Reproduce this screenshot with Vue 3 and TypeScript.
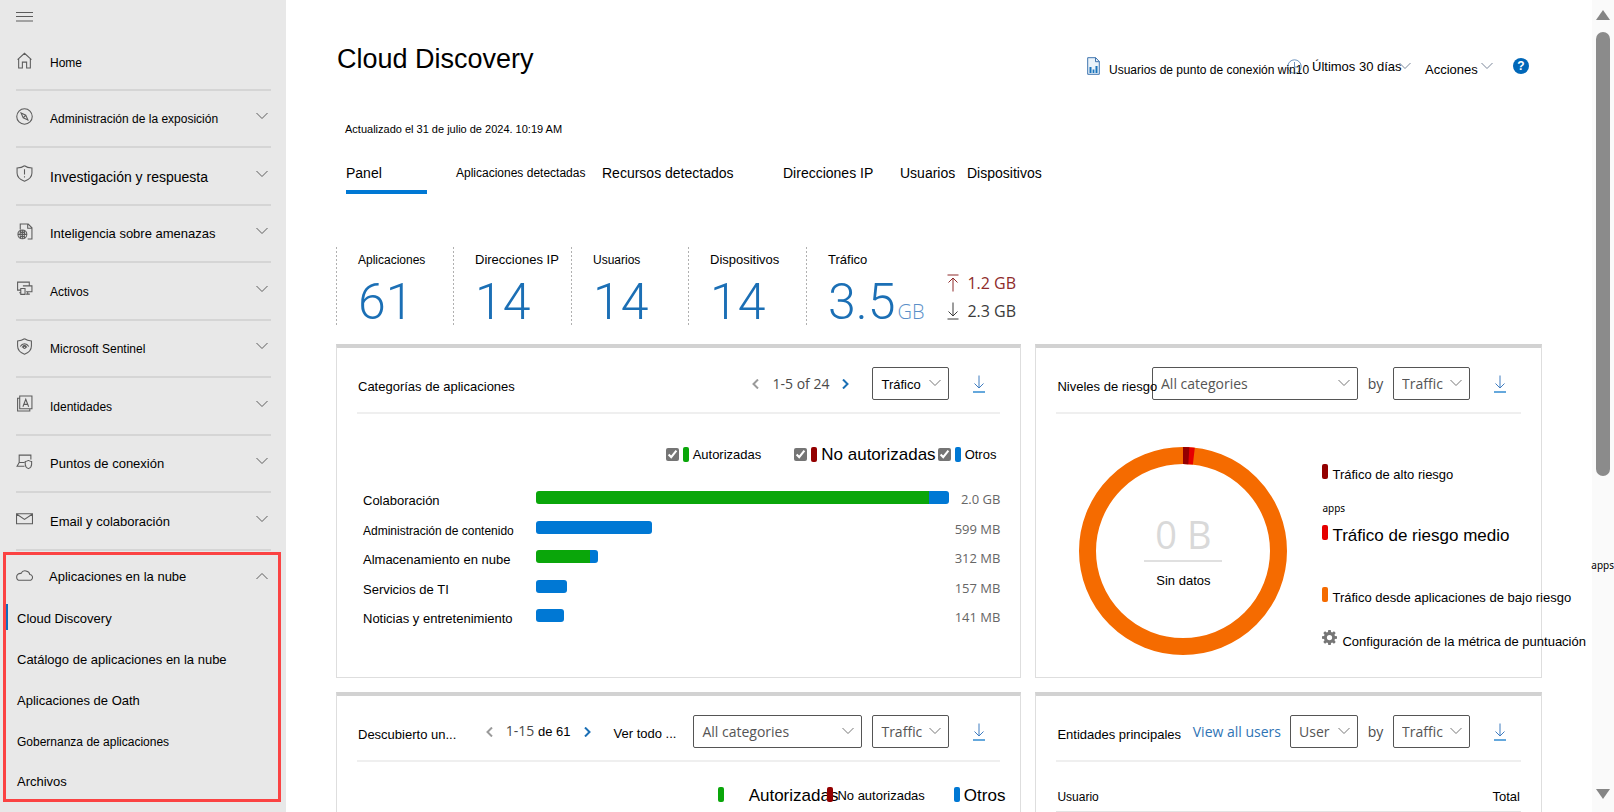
<script setup lang="ts">
import { ref } from 'vue'

interface NavItem {
  label: string
  size: string
  icon: string
  expandable: boolean
}

interface Segment {
  tone: string
  percent: number
}

interface CategoryRow {
  label: string
  size: string
  value: string
  segments: Segment[]
}

const icons: Record<string, string> = {
  home: 'M1.5 7.2 8 1.2l6.500 6M2.500 6.300V15H6V9.500h4V15h3.500V6.300',
  compass: 'M8 .7a7.300 7.300 0 1 0 0 14.600A7.300 7.300 0 0 0 8 .7M4.800 4.800l4.400 2 2 4.400-4.400-2zM6.800 9.200l2.400-2.400',
  shield: 'M8 .7C6 2.200 3.500 2.700 1 2.800v4.700c0 3.700 3 6.300 7 7.800 4-1.500 7-4.100 7-7.800V2.800C12.500 2.700 10 2.200 8 .7M8 4v5M8 10.500v1.300',
  intel: 'M4 6V1h7.500L15 4.500V15h-4M11 1v4h4M6 6.500a4.200 4.200 0 1 0 0 8.400 4.200 4.200 0 0 0 0-8.400M2 10.700h8M6 6.500v8.400M3.500 8.200c1.500 1 3.500 1 5 0M3.500 13.200c1.500-1 3.500-1 5 0M4.500 7c-1 2.500-1 5 0 7.500M7.500 7c1 2.500 1 5 0 7.500',
  assets: 'M4 9.500H1.500V2h11v3M6.500 5.500H15V11H9.500M4.500 8h4v5.500h-4zM3 12h1.500M11 11v2M9.500 13.300H13',
  sentinel: 'M8 .7C6 2 4 2.600 1.500 2.800v4.700c0 3.700 2.700 6.300 6.500 7.800 3.800-1.500 6.500-4.100 6.500-7.800V2.800C12 2.600 10 2 8 .7M4 8c2-3.500 6-3.500 8 0M5.800 9c1-2.800 3.400-2.800 4.400 0M8 7.800a1 1 0 1 0 0 2 1 1 0 0 0 0-2',
  identity: 'M3.500 1H15v12H3.500zM3.500 3H1.500v12H13v-2M6.500 11l2.700-7 2.700 7M7.500 8.800h3.500',
  endpoint: 'M3 9V2h11v4M3 9l-2 3.500h7M1 12.500h7M3 9h5M11.700 7c-1 .7-2 1-3 1v2.500c0 2 1.300 3.500 3 4.200 1.700-.7 3-2.200 3-4.200V8c-1 0-2-.3-3-1',
  mail: 'M.5 3.500h15v9.500H.5zM.5 3.800 8 8.800l7.500-5',
  cloud: 'M3.800 12.500h8.900a2.700 2.700 0 0 0 .3-5.400C12.500 3.500 6.500 2 4.800 6 2 5.800.6 7.600.6 9.300c0 1.900 1.300 3.200 3.200 3.200z'
}

const navItems: NavItem[] = [
  { label: 'Home', size: 't12', icon: 'home', expandable: false },
  { label: 'Administración de la exposición', size: 't12', icon: 'compass', expandable: true },
  { label: 'Investigación y respuesta', size: 't14', icon: 'shield', expandable: true },
  { label: 'Inteligencia sobre amenazas', size: 't13', icon: 'intel', expandable: true },
  { label: 'Activos', size: 't12', icon: 'assets', expandable: true },
  { label: 'Microsoft Sentinel', size: 't12', icon: 'sentinel', expandable: true },
  { label: 'Identidades', size: 't12', icon: 'identity', expandable: true },
  { label: 'Puntos de conexión', size: 't13', icon: 'endpoint', expandable: true },
  { label: 'Email y colaboración', size: 't13', icon: 'mail', expandable: true }
]

const cloudLinks = [
  { label: 'Cloud Discovery', size: 't13' },
  { label: 'Catálogo de aplicaciones en la nube', size: 't13' },
  { label: 'Aplicaciones de Oath', size: 't13' },
  { label: 'Gobernanza de aplicaciones', size: 't12' },
  { label: 'Archivos', size: 't13' }
]

const tabs = [
  { label: 'Panel', size: 't14' },
  { label: 'Aplicaciones detectadas', size: 't12' },
  { label: 'Recursos detectados', size: 't14' },
  { label: 'Direcciones IP', size: 't14' },
  { label: 'Usuarios', size: 't14' },
  { label: 'Dispositivos', size: 't14' }
]
const activeTab = ref('Panel')

const stats = [
  { label: 'Aplicaciones', size: 't12', value: '61' },
  { label: 'Direcciones IP', size: 't13', value: '14' },
  { label: 'Usuarios', size: 't12', value: '14' },
  { label: 'Dispositivos', size: 't13', value: '14' }
]

const series = ref([
  { label: 'Autorizadas', size: 't13', tone: 'green', on: true },
  { label: 'No autorizadas', size: 't17', tone: 'dark', on: true },
  { label: 'Otros', size: 't13', tone: 'blue', on: true }
])

const categories: CategoryRow[] = [
  { label: 'Colaboración', size: 't13', value: '2.0 GB', segments: [{ tone: 'green', percent: 95 }, { tone: 'blue', percent: 5 }] },
  { label: 'Administración de contenido', size: 't12', value: '599 MB', segments: [{ tone: 'blue', percent: 28 }] },
  { label: 'Almacenamiento en nube', size: 't13', value: '312 MB', segments: [{ tone: 'green', percent: 13 }, { tone: 'blue', percent: 2 }] },
  { label: 'Servicios de TI', size: 't13', value: '157 MB', segments: [{ tone: 'blue', percent: 7.5 }] },
  { label: 'Noticias y entretenimiento', size: 't13', value: '141 MB', segments: [{ tone: 'blue', percent: 6.7 }] }
]
</script>

<template>
  <div class="shell">
    <nav class="sidebar" aria-label="Principal">
      <div class="topbar">
        <button class="plain" aria-label="Menú">
          <svg width="18" height="12" viewBox="0 0 18 12" class="line-icon"><path d="M0 1.500h17M0 5.500h17M0 10h17" /></svg>
        </button>
      </div>
      <ul class="nav-list">
        <li v-for="item in navItems" :key="item.label">
          <button class="nav-row">
            <svg class="line-icon" width="17" height="17" viewBox="0 0 16 16"><path :d="icons[item.icon]" /></svg>
            <span class="nav-label" :class="item.size">{{ item.label }}</span>
            <svg v-if="item.expandable" class="line-icon" width="12" height="8" viewBox="0 0 12 8"><path d="M.5 1 6 6.500 11.500 1" /></svg>
          </button>
        </li>
      </ul>
      <section class="cloud-group">
        <button class="nav-row cloud-head" aria-expanded="true">
          <svg class="line-icon" width="17" height="17" viewBox="0 0 16 16"><path :d="icons.cloud" /></svg>
          <span class="nav-label t13">Aplicaciones en la nube</span>
          <svg class="line-icon" width="12" height="8" viewBox="0 0 12 8"><path d="M.5 7 6 1.500 11.500 7" /></svg>
        </button>
        <ul class="cloud-list">
          <li v-for="(link, i) in cloudLinks" :key="link.label" :class="{ current: i === 0 }">
            <a href="#" :class="link.size">{{ link.label }}</a>
          </li>
        </ul>
      </section>
    </nav>

    <main class="content">
      <header class="page-head">
        <h1>Cloud Discovery</h1>
        <div class="actions">
          <svg width="13" height="18" viewBox="0 0 13 18" class="doc">
            <path d="M.7.700h8L12.300 4.500v12.800H.700z" fill="#eaf3fa" stroke="#3f74ae" />
            <path d="M8.500.700v4h4" fill="none" stroke="#3f74ae" />
            <path d="M2.500 10h2v6h-2zM5.600 12.500h1.800V16H5.600zM8.500 9h2v7h-2z" fill="#1b74bb" />
          </svg>
          <button class="plain report t12">
            <svg width="15" height="15" viewBox="0 0 15 15"><circle cx="7.500" cy="7.500" r="6.700" /><path d="M7.500 3v5h3.500" /></svg>
            <span>Usuarios de punto de conexión win10</span>
          </button>
          <button class="plain range t13"><span>Últimos 30 días</span><svg width="12" height="8" viewBox="0 0 12 8"><path d="M.5 1 6 6.500 11.500 1" /></svg></button>
          <button class="plain more t13"><span>Acciones</span><svg width="12" height="8" viewBox="0 0 12 8"><path d="M.5 1 6 6.500 11.500 1" /></svg></button>
          <button class="help" aria-label="Ayuda">?</button>
        </div>
      </header>

      <p class="updated">Actualizado el 31 de julio de 2024. 10:19 AM</p>

      <div class="tabs" role="tablist">
        <button
          v-for="tab in tabs"
          :key="tab.label"
          role="tab"
          class="tab"
          :class="[tab.size, { active: tab.label === activeTab }]"
          :aria-selected="tab.label === activeTab"
          @click="activeTab = tab.label"
        >{{ tab.label }}</button>
      </div>

      <section class="stats">
        <div v-for="stat in stats" :key="stat.label" class="stat">
          <span class="stat-label" :class="stat.size">{{ stat.label }}</span>
          <span class="stat-value">{{ stat.value }}</span>
        </div>
        <div class="stat traffic">
          <div>
            <span class="stat-label t13">Tráfico</span>
            <span class="stat-value">3.5<small>GB</small></span>
          </div>
          <div class="flows">
            <span class="flow up"><svg width="12" height="18" viewBox="0 0 12 18"><path d="M.5 1h11M6 17.500V4M1.500 8.500 6 4l4.500 4.500" /></svg>1.2 GB</span>
            <span class="flow"><svg width="12" height="18" viewBox="0 0 12 18"><path d="M.5 17h11M6 .500V14M1.500 9.500 6 14l4.500-4.500" /></svg>2.3 GB</span>
          </div>
        </div>
      </section>

      <div class="cards">
        <section class="card">
          <header class="card-head">
            <h2>Categorías de aplicaciones</h2>
            <div class="pager">
              <button class="plain prev" aria-label="Anterior"><svg width="7" height="10" viewBox="0 0 7 10"><path d="M6 .500 1.500 5 6 9.500" /></svg></button>
              <span>1-5 of 24</span>
              <button class="plain next" aria-label="Siguiente"><svg width="7" height="10" viewBox="0 0 7 10"><path d="M1 .500 5.500 5 1 9.500" /></svg></button>
            </div>
            <span class="picker w77">
              <select class="dark-text" aria-label="Medida"><option>Tráfico</option></select>
              <svg width="12" height="8" viewBox="0 0 12 8"><path d="M.5 1 6 6.500 11.500 1" /></svg>
            </span>
            <button class="plain download" aria-label="Descargar"><svg width="14" height="18" viewBox="0 0 14 18"><path d="M7 .500V13M2.500 8.500 7 13l4.500-4.500" /><path class="base" d="M1 17h12" /></svg></button>
          </header>
          <div class="series">
            <label v-for="s in series" :key="s.label" :class="s.size">
              <input v-model="s.on" type="checkbox" />
              <i class="chip" :class="s.tone"></i>
              <span>{{ s.label }}</span>
            </label>
          </div>
          <ul class="bars">
            <li v-for="row in categories" :key="row.label">
              <span class="bar-label" :class="row.size">{{ row.label }}</span>
              <span class="track">
                <i v-for="seg in row.segments" :key="seg.tone" :class="seg.tone" :style="{ width: seg.percent + '%' }"></i>
              </span>
              <span class="bar-value">{{ row.value }}</span>
            </li>
          </ul>
        </section>

        <section class="card">
          <header class="card-head">
            <h2 class="tight">Niveles de riesgo</h2>
            <span class="picker w206">
              <select aria-label="Categoría"><option>All categories</option></select>
              <svg width="12" height="8" viewBox="0 0 12 8"><path d="M.5 1 6 6.500 11.500 1" /></svg>
            </span>
            <span class="by">by</span>
            <span class="picker w77">
              <select aria-label="Medida"><option>Traffic</option></select>
              <svg width="12" height="8" viewBox="0 0 12 8"><path d="M.5 1 6 6.500 11.500 1" /></svg>
            </span>
            <button class="plain download" aria-label="Descargar"><svg width="14" height="18" viewBox="0 0 14 18"><path d="M7 .500V13M2.500 8.500 7 13l4.500-4.500" /><path class="base" d="M1 17h12" /></svg></button>
          </header>
          <div class="risk">
            <div class="donut">
              <svg viewBox="0 0 208 208">
                <circle cx="104" cy="104" r="95.500" class="low" />
                <circle cx="104" cy="104" r="95.500" class="mid" pathLength="600" />
                <circle cx="104" cy="104" r="95.500" class="high" pathLength="600" />
              </svg>
              <div class="donut-text">
                <strong>0 B</strong>
                <span class="t13">Sin datos</span>
              </div>
            </div>
            <ul class="risk-legend">
              <li class="t13"><i class="chip dark"></i><span>Tráfico de alto riesgo</span></li>
              <li class="apps">apps</li>
              <li class="t17 medium"><i class="chip red"></i><span>Tráfico de riesgo medio</span></li>
              <li class="t13 small-risk"><i class="chip orange"></i><span>Tráfico desde aplicaciones de bajo riesgo</span></li>
              <li class="t13 config">
                <button class="plain">
                  <svg width="15" height="15" viewBox="0 0 16 16"><path fill-rule="evenodd" d="M6.700 0h2.600l.4 2.200 1.200.5L12.800 1.400l1.800 1.800-1.300 1.900.5 1.200 2.200.4v2.600l-2.200.4-.5 1.200 1.300 1.900-1.800 1.800-1.900-1.300-1.200.5-.4 2.200H6.700l-.4-2.200-1.200-.5-1.900 1.300-1.800-1.800 1.300-1.900-.5-1.200L0 9.300V6.700l2.200-.4.5-1.200L1.400 3.200l1.800-1.800 1.900 1.300 1.200-.5zM8 5.200a2.800 2.800 0 1 0 0 5.600 2.800 2.800 0 0 0 0-5.600z" /></svg>
                  <span>Configuración de la métrica de puntuación</span>
                </button>
              </li>
            </ul>
          </div>
        </section>

        <section class="card lower">
          <header class="card-head">
            <h2>Descubierto un...</h2>
            <div class="pager">
              <button class="plain prev" aria-label="Anterior"><svg width="7" height="10" viewBox="0 0 7 10"><path d="M6 .500 1.500 5 6 9.500" /></svg></button>
              <span>1-15 <b>de 61</b></span>
              <button class="plain next" aria-label="Siguiente"><svg width="7" height="10" viewBox="0 0 7 10"><path d="M1 .500 5.500 5 1 9.500" /></svg></button>
            </div>
            <a href="#" class="see-all t13">Ver todo ...</a>
            <span class="picker w169">
              <select aria-label="Categoría"><option>All categories</option></select>
              <svg width="12" height="8" viewBox="0 0 12 8"><path d="M.5 1 6 6.500 11.500 1" /></svg>
            </span>
            <span class="picker w77">
              <select aria-label="Medida"><option>Traffic</option></select>
              <svg width="12" height="8" viewBox="0 0 12 8"><path d="M.5 1 6 6.500 11.500 1" /></svg>
            </span>
            <button class="plain download" aria-label="Descargar"><svg width="14" height="18" viewBox="0 0 14 18"><path d="M7 .500V13M2.500 8.500 7 13l4.500-4.500" /><path class="base" d="M1 17h12" /></svg></button>
          </header>
          <div class="lower-legend">
            <i class="chip green"></i><span class="t17 spaced">Autorizadas</span>
            <i class="chip dark overlap"></i><span class="t13">No autorizadas</span>
            <i class="chip blue push"></i><span class="t17">Otros</span>
          </div>
        </section>

        <section class="card lower">
          <header class="card-head">
            <h2>Entidades principales</h2>
            <a href="#" class="view-all">View all users</a>
            <span class="picker w68">
              <select aria-label="Entidad"><option>User</option></select>
              <svg width="12" height="8" viewBox="0 0 12 8"><path d="M.5 1 6 6.500 11.500 1" /></svg>
            </span>
            <span class="by">by</span>
            <span class="picker w77">
              <select aria-label="Medida"><option>Traffic</option></select>
              <svg width="12" height="8" viewBox="0 0 12 8"><path d="M.5 1 6 6.500 11.500 1" /></svg>
            </span>
            <button class="plain download" aria-label="Descargar"><svg width="14" height="18" viewBox="0 0 14 18"><path d="M7 .500V13M2.500 8.500 7 13l4.500-4.500" /><path class="base" d="M1 17h12" /></svg></button>
          </header>
          <table class="entities">
            <thead>
              <tr><th class="t12">Usuario</th><th class="t13 total">Total</th></tr>
            </thead>
          </table>
        </section>
      </div>
    </main>

    <div class="scrollbar">
      <svg width="16" height="12" viewBox="0 0 16 12"><path d="M8 1 15 11H1z" /></svg>
      <div class="rail"><div class="thumb"></div></div>
      <svg width="16" height="12" viewBox="0 0 16 12"><path d="M1 1h14L8 11z" /></svg>
      <span class="apps stray">apps</span>
    </div>
  </div>
</template>

<style>
body {
  margin: 0;
  background: #fff;
}
</style>

<style scoped>
.shell {
  display: flex;
  height: 100vh;
  overflow: hidden;
  background: #fff;
  color: #000;
  font-family: "Liberation Sans", Arial, sans-serif;
  font-size: 13px;
  line-height: 20px;
}
.shell * {
  box-sizing: border-box;
}
ul {
  list-style: none;
  margin: 0;
  padding: 0;
}
button,
select {
  font-family: inherit;
  font-size: inherit;
  line-height: inherit;
  color: inherit;
}
button {
  border: 0;
  background: none;
  padding: 0;
  cursor: pointer;
}
a {
  color: inherit;
  text-decoration: none;
}
svg {
  display: block;
  flex: none;
}
.t12 { font-size: 12px; }
.t13 { font-size: 13px; }
.t14 { font-size: 14px; }
.t17 { font-size: 17px; }

.sidebar {
  flex: none;
  width: 286px;
  background: #e8e8e8;
}
.line-icon {
  fill: none;
  stroke: #5c5c5c;
  stroke-width: 1;
}
.topbar {
  height: 33px;
  padding: 11px 16px 0;
}
.topbar .plain {
  display: block;
}
.nav-list {
  padding: 0 15px 0 16px;
}
.nav-list li {
  height: 57px;
  padding-bottom: 5px;
  border-bottom: 2px solid #d5d5d5;
}
.nav-list li:nth-child(odd) {
  height: 58px;
}
.nav-list li:first-child {
  padding-bottom: 2px;
}
.nav-row {
  display: flex;
  align-items: center;
  width: 100%;
  height: 100%;
  padding-right: 3px;
  text-align: left;
}
.nav-label {
  flex: 1;
  padding: 6px 0 0 17px;
}
.cloud-group {
  margin: 1px 5px 0 3px;
  border: 3px solid #fb4343;
}
.cloud-head {
  height: 41px;
  padding: 0 10px 0 10px;
}
.cloud-head .nav-label {
  padding: 2px 0 0 16px;
}
.cloud-list li {
  display: flex;
  align-items: center;
  height: 41px;
}
.cloud-list li:last-child {
  height: 39px;
}
.cloud-list a {
  border-left: 2px solid transparent;
  padding: 5px 0 1px 9px;
}
.cloud-list .current a {
  border-color: #0f6cbd;
}

.content {
  flex: 1;
  min-width: 0;
  padding: 42px 50px 0;
}
.page-head {
  display: flex;
  justify-content: space-between;
  height: 34px;
}
h1 {
  margin: 0;
  padding-left: 1px;
  font-size: 27px;
  font-weight: 400;
  line-height: 34px;
  white-space: nowrap;
}
.actions {
  display: grid;
  grid-template-columns: 22px 203px 113px 88px 16px;
  align-items: center;
  height: 48px;
  padding-right: 13px;
  white-space: nowrap;
}
.actions .plain {
  position: relative;
  display: flex;
  align-items: center;
}
.actions .plain svg {
  fill: none;
  stroke: #7a8699;
}
.actions .report svg {
  position: absolute;
  right: 10px;
  stroke: #6b93be;
}
.report span,
.more span {
  padding-top: 7px;
}
.range span {
  padding-top: 2px;
}
.report span {
  position: relative;
}
.range svg {
  margin-left: -3px;
}
.more svg {
  margin-left: 3px;
}
.help {
  width: 16px;
  height: 16px;
  border-radius: 50%;
  background: #0067b8;
  color: #fff;
  font-size: 12px;
  font-weight: 700;
  line-height: 16px;
}
.updated {
  margin: 43px 0 0;
  padding-left: 9px;
  font-size: 11px;
  line-height: 20px;
}
.tabs {
  display: grid;
  grid-template-columns: 110px 146px 181px 117px 67px auto;
  margin: 24px 0 0 10px;
}
.tab {
  justify-self: start;
  border-bottom: 4px solid transparent;
  padding-bottom: 7px;
  text-align: left;
  white-space: nowrap;
}
.tab.active {
  width: 81px;
  border-color: #0078d4;
}

.stats {
  display: grid;
  grid-template-columns: 117px 118px 117px 118px auto;
  grid-template-rows: 80px;
  margin-top: 53px;
}
.stat {
  padding: 3px 0 0 22px;
  background: repeating-linear-gradient(#b0b0b0 0 2px, transparent 2px 4px) 0 0 / 1px 100% no-repeat;
}
.stat-label,
.stat-value {
  display: block;
  white-space: nowrap;
}
.stat-value {
  height: 52px;
  margin-top: 6px;
  color: #1b6fb5;
  font-family: Roboto, "Open Sans", sans-serif;
  font-size: 50px;
  font-weight: 300;
  line-height: 52px;
}
.stat-value small {
  margin-left: 2px;
  color: #5a8fc8;
  font-family: "Open Sans", "Noto Sans", sans-serif;
  font-size: 20px;
}
.traffic {
  display: flex;
  gap: 23px;
}
.flows {
  display: flex;
  flex-direction: column;
  gap: 8px;
  padding-top: 23px;
}
.flow {
  display: flex;
  align-items: center;
  gap: 8px;
  color: #3b3b3b;
  font-family: "Open Sans", "Noto Sans", sans-serif;
  font-size: 16px;
  white-space: nowrap;
}
.flow svg {
  fill: none;
  stroke: currentColor;
}
.flow.up {
  color: #8e2a2a;
}

.cards {
  display: grid;
  grid-template-columns: 686fr 507fr;
  gap: 14px;
  margin-top: 17px;
}
.card {
  min-width: 0;
  min-height: 334px;
  padding: 0 20px;
  border: 1px solid #dedede;
  border-top: 4px solid #d2d2d2;
}
.card-head {
  display: flex;
  align-items: center;
  padding: 19px 14px 12px 0;
  border-bottom: 2px solid #efefef;
  color: #4a4a4a;
  font-family: "Open Sans", "Noto Sans", sans-serif;
  font-size: 14px;
  white-space: nowrap;
}
h2 {
  flex: 1;
  min-width: 0;
  margin: 0;
  padding: 6px 0 0 1px;
  color: #000;
  font-family: "Liberation Sans", Arial, sans-serif;
  font-size: 13px;
  font-weight: 400;
  line-height: 20px;
}
h2.tight {
  position: relative;
  z-index: 1;
}
.pager {
  display: flex;
  align-items: center;
  gap: 13px;
  margin-right: 23px;
}
.pager b {
  color: #000;
  font-family: "Liberation Sans", Arial, sans-serif;
  font-size: 13px;
  font-weight: 400;
}
.pager svg {
  fill: none;
  stroke-width: 2;
}
.prev svg { stroke: #9a9a9a; }
.next svg { stroke: #1b6fb5; }
.picker {
  position: relative;
  height: 33px;
}
.picker + .picker {
  margin-left: 10px;
}
.picker select {
  width: 100%;
  height: 33px;
  padding: 0 24px 0 8px;
  border: 1px solid #555;
  border-radius: 2px;
  background: #fff;
  color: #555;
  appearance: none;
}
.picker select.dark-text {
  padding-top: 2px;
  color: #000;
  font-family: "Liberation Sans", Arial, sans-serif;
  font-size: 13px;
}
.picker svg {
  position: absolute;
  top: 12px;
  right: 8px;
  fill: none;
  stroke: #777;
  pointer-events: none;
}
.w68 { width: 68px; }
.w77 { width: 77px; }
.w169 { width: 169px; }
.w206 { width: 206px; }
.by {
  width: 35px;
  text-align: center;
}
.download {
  margin-left: 23px;
}
.download svg {
  fill: none;
  stroke: #3f7cc0;
}
.download .base {
  stroke: #65a8dc;
  stroke-width: 2;
}
.see-all {
  margin-right: 17px;
  padding-top: 5px;
  color: #000;
  font-family: "Liberation Sans", Arial, sans-serif;
}
.view-all {
  margin-right: 9px;
  color: #2f74b5;
}

.chip {
  flex: none;
  width: 6px;
  height: 15px;
  border-radius: 2px;
}
.green { background: #0aa60a; }
.blue { background: #0078d4; }
.dark { background: #930000; }
.red { background: #e50000; }
.orange { background: #f56b00; }

.series {
  display: flex;
  justify-content: flex-end;
  padding: 29px 4px 0 0;
}
.series label {
  display: flex;
  align-items: center;
  gap: 4px;
  white-space: nowrap;
}
.series span {
  padding-top: 2px;
}
.series label + label {
  margin-left: 2px;
}
.series label:nth-child(2) {
  margin-left: 33px;
}
.series input {
  width: 13px;
  height: 13px;
  margin: 0;
  accent-color: #757575;
}
.bars {
  margin-top: 18px;
}
.bars li {
  display: grid;
  grid-template-columns: 179px 1fr 51px;
  align-items: center;
  height: 29px;
}
.bars li:nth-child(even) {
  height: 30px;
}
.bars .track {
  display: flex;
  height: 13px;
}
.track i:first-child {
  border-radius: 3px 0 0 3px;
}
.track i:last-child {
  border-radius: 0 3px 3px 0;
}
.track i:only-child {
  border-radius: 3px;
}
.bar-label {
  padding: 7px 0 0 6px;
  white-space: nowrap;
}
.bar-value {
  padding-top: 3px;
  color: #666;
  font-family: "Open Sans", "Noto Sans", sans-serif;
  font-size: 13px;
  text-align: right;
}

.risk {
  display: flex;
  gap: 35px;
  padding-left: 23px;
}
.donut {
  flex: none;
  position: relative;
  width: 208px;
  height: 208px;
  margin-top: 33px;
}
.donut circle {
  fill: none;
  stroke-width: 17;
}
.low { stroke: #f56b00; }
.mid,
.high {
  transform: rotate(-90deg);
  transform-origin: center;
}
.mid {
  stroke: #e50000;
  stroke-dasharray: 11 589;
}
.high {
  stroke: #930000;
  stroke-dasharray: 6 594;
}
.donut-text {
  position: absolute;
  inset: 64px 65px auto;
  text-align: center;
}
.donut-text strong {
  display: block;
  margin-bottom: 9px;
  padding-bottom: 3px;
  border-bottom: 2px solid #e0e0e0;
  color: #d9d9d9;
  font-family: "Open Sans", "Noto Sans", sans-serif;
  font-size: 38px;
  font-weight: 400;
  line-height: 46px;
}
.risk-legend {
  padding-top: 50px;
  white-space: nowrap;
}
.risk-legend li {
  display: flex;
  gap: 4px;
  height: 20px;
}
.risk-legend li > span {
  padding-top: 1px;
}
.risk-legend .apps {
  margin-top: 14px;
}
.risk-legend .medium {
  margin-top: 7px;
}
.risk-legend .small-risk {
  margin-top: 42px;
}
.risk-legend .config {
  margin-top: 23px;
}
.config .plain {
  display: flex;
  gap: 5px;
}
.config svg {
  fill: #767676;
}
.config span {
  padding-top: 2px;
}
.apps {
  font-family: "Noto Sans", sans-serif;
  font-size: 10px;
}

.lower-legend {
  display: flex;
  align-items: center;
  justify-content: flex-end;
  gap: 4px;
  margin-right: -5px;
  padding-top: 21px;
  white-space: nowrap;
}
.lower-legend span {
  padding-top: 3px;
}
.spaced {
  margin-left: 21px;
}
.overlap {
  margin-left: -15px;
}
.push {
  margin-left: 25px;
}
.entities {
  width: 100%;
  border-collapse: collapse;
}
.entities th {
  padding: 25px 1px 4px;
  border-bottom: 2px solid #e3e3e3;
  font-weight: 400;
  text-align: left;
}
.entities .total {
  text-align: right;
}

.scrollbar {
  position: relative;
  display: flex;
  flex: none;
  flex-direction: column;
  align-items: center;
  width: 22px;
  padding: 9px 0 12px;
  background: #fafafa;
}
.scrollbar svg {
  fill: #858585;
}
.rail {
  flex: 1;
  padding: 11px 0 4px;
}
.thumb {
  width: 14px;
  height: 59%;
  border-radius: 7px;
  background: #8b8b8b;
}
.stray {
  position: absolute;
  top: 69%;
  right: 0;
  line-height: 1;
}
</style>
